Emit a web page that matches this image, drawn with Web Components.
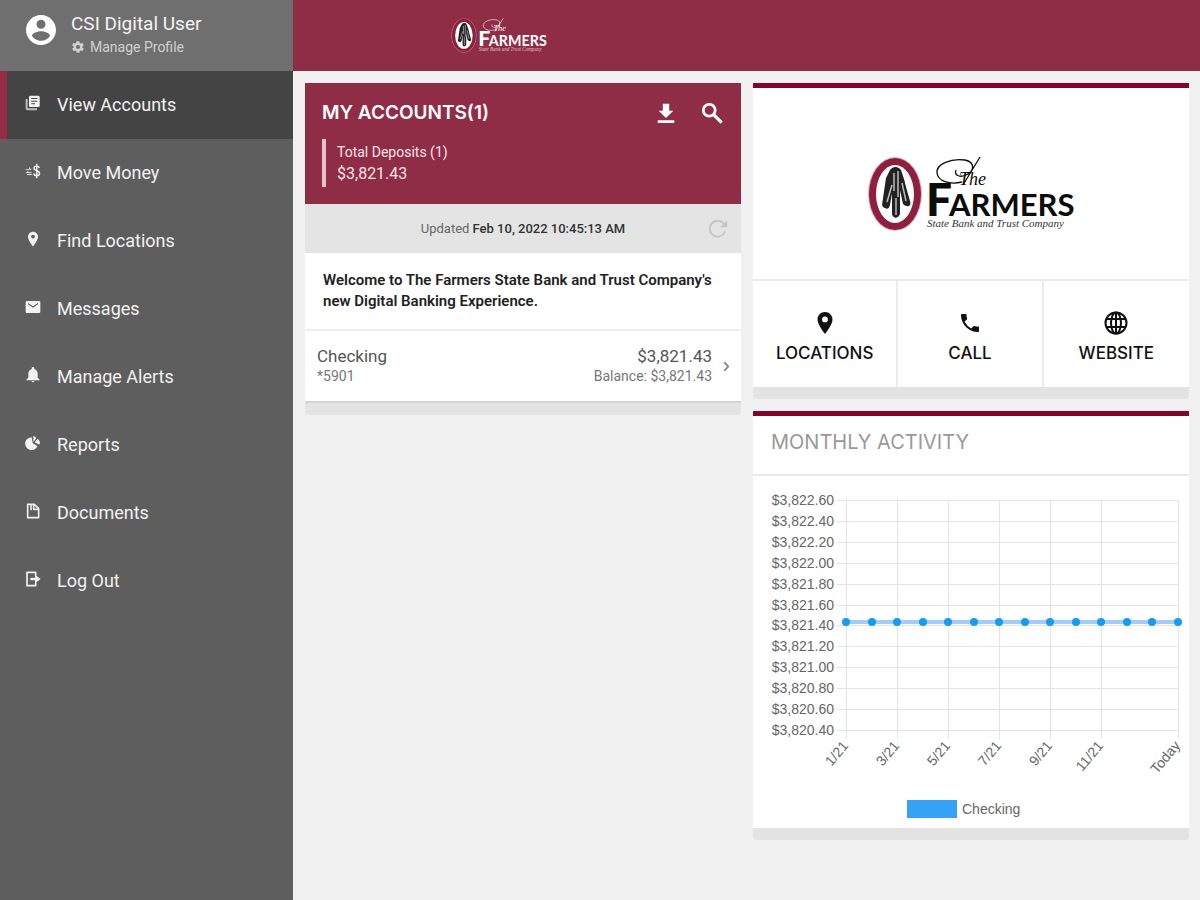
<!DOCTYPE html>
<html lang="en">
<head>
<meta charset="utf-8">
<meta name="viewport" content="width=device-width, initial-scale=1">
<title>My Accounts</title>
<style>
  body { margin: 0; background: #f1f1f1; font-family: Roboto, "Liberation Sans", sans-serif; }
</style>
</head>
<body>
<bank-app></bank-app>
<script>
const define = (name, html, setup) => {
  const template = document.createElement('template');
  template.innerHTML = html;
  customElements.define(name, class extends HTMLElement {
    connectedCallback() {
      if (this.shadowRoot) return;
      const root = this.attachShadow({ mode: 'open' });
      root.append(template.content.cloneNode(true));
      if (setup) setup.call(this, root);
    }
  });
};

const ICONS = {
  user: '<path d="M12 2C6.5 2 2 6.500 2 12s4.500 10 10 10 10-4.500 10-10S17.500 2 12 2zm0 3.200a3 3 0 1 1 0 6 3 3 0 0 1 0-6zM12 19.200a7.200 7.200 0 0 1-6-3.200c0-2 4-3.100 6-3.100s6 1.100 6 3.100a7.200 7.200 0 0 1-6 3.200z"/>',
  gear: '<path d="M19.400 13a7.500 7.500 0 0 0 0-2l2.100-1.600c.2-.2.3-.4.1-.7l-2-3.400c-.1-.2-.4-.3-.6-.2l-2.500 1a7.300 7.300 0 0 0-1.700-1l-.4-2.600c0-.3-.2-.5-.5-.5h-4c-.2 0-.4.2-.5.500l-.4 2.600a7.700 7.700 0 0 0-1.700 1l-2.500-1c-.2-.1-.5 0-.6.200l-2 3.400c-.1.300-.1.500.1.700L4.600 11a8 8 0 0 0 0 2l-2.200 1.600c-.1.200-.2.400-.1.700l2 3.400c.1.200.4.300.6.200l2.500-1c.5.400 1.100.8 1.700 1l.4 2.600c.1.300.3.500.5.500h4c.3 0 .5-.2.500-.5l.4-2.600a7.300 7.300 0 0 0 1.700-1l2.500 1c.2.100.5 0 .6-.2l2-3.400c.2-.3.100-.5-.1-.7L19.400 13zM12 15.500a3.500 3.500 0 1 1 0-7 3.500 3.500 0 0 1 0 7z"/>',
  library: '<path d="M4 6H1v14c0 1.700 1.300 3 3 3h14v-3H4z" opacity=".7"/><path fill-rule="evenodd" d="M20 1H8a2 2 0 0 0-2 2v13c0 1.100.9 2 2 2h12a2 2 0 0 0 2-2V3a2 2 0 0 0-2-2zM9.500 4.500h9V6h-9zm0 4h9V10h-9zm0 4H15V14H9.500z"/>',
  money: '<path d="M1 9h5V6l4 4H1zM10 14H5v-2.500L1 15h9z"/><path d="M10 18H3v-1.500h7z"/><path d="M21.500 7.500C21 5.500 19.500 4.700 17.500 4.700c-2.400 0-4 1.300-4 3.300 0 4.700 8.300 2.500 8.300 7.300 0 2.300-1.700 3.700-4.200 3.700-2.600 0-4.200-1.300-4.500-3.500M17.600 1v22" fill="none" stroke="currentColor" stroke-width="2.200"/>',
  pin: '<path d="M12 1C7.700 1 4.500 4.300 4.500 8.500 4.500 14 12 23 12 23s7.500-9 7.500-14.500C19.500 4.300 16.300 1 12 1zm0 10.300a2.900 2.900 0 1 1 0-5.800 2.900 2.900 0 0 1 0 5.800z"/>',
  mail: '<path d="M21 3H3a2 2 0 0 0-2 2v14c0 1.100.9 2 2 2h18a2 2 0 0 0 2-2V5a2 2 0 0 0-2-2zm-1.500 5L12 13 4.500 8V6l7.500 5 7.500-5z"/>',
  bell: '<path d="M12 23a2.400 2.400 0 0 0 2.300-2H9.700a2.400 2.400 0 0 0 2.300 2zm7-7v-6c0-3.400-1.900-6-5-6.800V2a2 2 0 0 0-4 0v1.200C6.900 4 5 6.600 5 10v6l-3 3v1h20v-1z"/>',
  pie: '<path d="M10 3.200A9.700 9.700 0 1 0 18.700 17L11.500 12z"/><path d="M12.500 1v9.500L17 5a8 8 0 0 0-4.500-4zM19 5.500 14.500 11 21.500 14.500C23.500 11 22 7.500 19 5.500z"/>',
  doc: '<path d="M4 2h10l6.500 6.500V22H4z M13 2v7.500h7M9 2v9" fill="none" stroke="currentColor" stroke-width="2.400" stroke-linejoin="round"/>',
  exit: '<path d="M16 7V2H3v20h13v-5" fill="none" stroke="currentColor" stroke-width="2.500" stroke-linejoin="round"/><path d="M8 10h7V5.500l8.500 6.500-8.500 6.500V14H8z"/>',
  download: '<path d="M20 9.500h-4.500V2h-7v7.500H4l8 8zM3 20v3h18v-3z"/>',
  search: '<circle cx="9" cy="9" r="6.500" fill="none" stroke="currentColor" stroke-width="3"/><path d="m13.500 13.500 9 9" stroke="currentColor" stroke-width="3.400"/>',
  refresh: '<path d="M20.500 15A9.500 9.500 0 1 1 18.800 5.300L21 7.500" fill="none" stroke="currentColor" stroke-width="2.200"/><path d="M23 1.500V10h-8.500z"/>',
  chevron: '<path d="m8 4 7 8-7 8" fill="none" stroke="currentColor" stroke-width="3.500"/>',
  phone: '<path d="M6.600 10.800a15 15 0 0 0 6.600 6.600l2.200-2.200c.3-.3.700-.4 1-.2 1.100.4 2.300.6 3.600.6.600 0 1 .4 1 1V20c0 .6-.4 1-1 1C10.600 21 3 13.400 3 4c0-.6.400-1 1-1h3.500c.6 0 1 .4 1 1 0 1.200.2 2.400.6 3.600.1.300 0 .7-.3 1z"/>',
  globe: '<g fill="none" stroke="currentColor" stroke-width="2"><circle cx="12" cy="12" r="10.500"/><ellipse cx="12" cy="12" rx="5" ry="10.500"/><path d="M12 1.500v21M2.500 8h19M2.500 16h19"/></g>'
};

define('ui-icon', `
<style>
  :host { display: inline-flex; width: 18px; height: 18px; flex: none; }
  svg { width: 100%; height: 100%; fill: currentColor; }
</style>
<svg viewBox="0 0 24 24" aria-hidden="true"></svg>`, function (root) {
  root.querySelector('svg').innerHTML = ICONS[this.getAttribute('name')];
});

define('bank-logo', `
<style>
  :host { display: block; color: #0c0c0c; }
  svg { display: block; width: 100%; overflow: visible; }
  .tag { fill: var(--logo-tag, #333); }
</style>
<svg viewBox="0 0 208 80" role="img" aria-label="The Farmers State Bank and Trust Company">
  <ellipse cx="28" cy="40" rx="27" ry="37" fill="var(--logo-edge, #d9b9c2)"/>
  <ellipse cx="28" cy="40" rx="26" ry="36" fill="#8e1f3f"/>
  <ellipse cx="28" cy="40" rx="19" ry="29" fill="#fff"/>
  <g fill="#222">
    <path d="M23 16c3-4 8-4 11 0l3 9 5 25c-2 3-4 2-6 0l-3-14v24c-2 5-7 5-8 0V38l-4 13c-3 4-5 3-6 0l4-27z"/>
    <path d="m21 27-4 26c3 3 5 2 6-2l4-24zM35 27l5 25c3 1 4-2 3-5l-6-21z"/>
  </g>
  <path d="M27 19v18M31 17v26M25 31l-5 17M35 29l4 18M29 44v17" stroke="#bbb" stroke-width="1.500" fill="none"/>
  <path d="M95 28C82 31 71 27 70 19 69 10 84 4 98 6c10 2 10 11 1 15-7 3-12 0-10-5M113 3 96 31" fill="none" stroke="currentColor" stroke-width="1.300"/>
  <text x="92" y="31" font-family="Liberation Serif, serif" font-style="italic" font-size="18" fill="currentColor">The</text>
  <text y="62" font-family="Lato, sans-serif" font-weight="700" fill="currentColor"><tspan x="59" font-size="46" font-weight="900">F</tspan><tspan x="82" font-size="31">ARMERS</tspan></text>
  <text class="tag" x="60" y="73" font-family="Liberation Serif, serif" font-style="italic" font-size="11">State Bank and Trust Company</text>
</svg>`);

define('nav-item', `
<style>
  :host { display: block; }
  a { display: flex; align-items: center; gap: 16px; height: 68px; padding-left: 18px; border-left: 7px solid transparent; box-sizing: border-box;
      color: #f2f2f2; font-size: 18px; line-height: 24px; text-decoration: none; }
  :host([current]) a { background: #444; border-left-color: #952b49; }
  .icon { display: contents; }
  ui-icon { width: 16px; height: 16px; margin-bottom: 4px; }
</style>
<a href="#"><span class="icon"></span><slot></slot></a>`, function (root) {
  root.querySelector('.icon').innerHTML = `<ui-icon name="${this.getAttribute('icon')}"></ui-icon>`;
  if (this.hasAttribute('current')) root.querySelector('a').setAttribute('aria-current', 'page');
});

define('side-nav', `
<style>
  :host { display: block; background: #5e5e5e; color: #fff; }
  .profile { display: flex; gap: 12px; height: 71px; padding: 12px 0 0 23px; box-sizing: border-box; background: #6f6f6f; }
  .profile > ui-icon { width: 36px; height: 36px; }
  .name { font-size: 19px; line-height: 24px; color: #f4f4f4; }
  .manage { display: flex; align-items: center; gap: 5px; color: #d0d0d0; font-size: 14px; line-height: 22px; text-decoration: none; }
  .manage ui-icon { width: 14px; height: 14px; }
</style>
<div class="profile">
  <ui-icon name="user"></ui-icon>
  <div><div class="name">CSI Digital User</div><a class="manage" href="#"><ui-icon name="gear"></ui-icon>Manage Profile</a></div>
</div>
<nav aria-label="Main">
  <nav-item icon="library" current>View Accounts</nav-item>
  <nav-item icon="money">Move Money</nav-item>
  <nav-item icon="pin">Find Locations</nav-item>
  <nav-item icon="mail">Messages</nav-item>
  <nav-item icon="bell">Manage Alerts</nav-item>
  <nav-item icon="pie">Reports</nav-item>
  <nav-item icon="doc">Documents</nav-item>
  <nav-item icon="exit">Log Out</nav-item>
</nav>`);

define('app-header', `
<style>
  :host { display: flex; align-items: center; height: 71px; padding-left: 158px; box-sizing: border-box; background: #902d46; }
  bank-logo { width: 96px; color: #fff; --logo-tag: #e3bfc8; --logo-edge: #c98a9a; }
</style>
<bank-logo></bank-logo>`);

define('ui-card', `
<style>
  :host { display: block; }
  .body { background: #fff; }
  :host([accent]) .body { border-top: 5px solid #820629; }
  .foot { height: 12px; background: #e3e3e3; border-radius: 0 0 4px 4px; }
</style>
<div class="body"><slot></slot></div><div class="foot"></div>`);

define('accounts-card', `
<style>
  :host { display: block; }
  .head { background: #902d46; color: #fff; padding: 16px 18px 17px 17px; }
  .bar { display: flex; align-items: center; height: 28px; }
  h2 { flex: 1; margin: 0; font: 600 19px/28px Inter, sans-serif; }
  button { display: flex; border: 0; padding: 0; background: none; color: inherit; }
  .bar button { margin-left: 24px; }
  .bar ui-icon { width: 22px; height: 22px; }
  .total { margin-top: 12px; border-left: 4px solid #e6c3cc; padding: 2px 0 2px 11px; color: #f6e4e8; font-size: 14px; line-height: 22px; }
  .total strong { display: block; font-weight: 400; font-size: 16px; }
  .updated { display: grid; grid-template-columns: 1fr auto 1fr; align-items: center; height: 49px; padding: 0 13px; background: #e4e4e4; color: #666; font-size: 13px; line-height: 20px; }
  .updated p { grid-column: 2; margin: 0; }
  .updated time { color: #333; font-weight: 500; }
  .updated button { justify-self: end; color: #c6c6c6; }
  .updated ui-icon { width: 20px; height: 20px; }
  .welcome { margin: 0; padding: 17px 18px; border-bottom: 2px solid #eee; color: #222; font-weight: 600; font-size: 15px; line-height: 21px; }
  .account { display: flex; align-items: center; height: 72px; box-sizing: border-box; padding: 0 8px 0 12px; color: #555; text-decoration: none; border-bottom: 2px solid #d4d4d4; font-size: 17px; line-height: 20px; }
  .account span { display: block; }
  .name { flex: 1; }
  .sum { text-align: right; margin-right: 8px; }
  small { display: block; font-size: 14px; color: #777; }
  .account ui-icon { width: 13px; height: 13px; color: #888; }
</style>
<ui-card>
  <div class="head">
    <div class="bar"><h2>MY ACCOUNTS(1)</h2>
      <button aria-label="Download"><ui-icon name="download"></ui-icon></button>
      <button aria-label="Search"><ui-icon name="search"></ui-icon></button></div>
    <div class="total">Total Deposits (1)<strong>$3,821.43</strong></div>
  </div>
  <div class="updated"><p>Updated <time>Feb 10, 2022 10:45:13 AM</time></p><button aria-label="Refresh"><ui-icon name="refresh"></ui-icon></button></div>
  <p class="welcome">Welcome to The Farmers State Bank and Trust Company's new Digital Banking Experience.</p>
  <a class="account" href="#"><span class="name">Checking<small>*5901</small></span><span class="sum">$3,821.43<small>Balance: $3,821.43</small></span><ui-icon name="chevron"></ui-icon></a>
</ui-card>`);

define('contact-card', `
<style>
  :host { display: block; }
  .logo { display: flex; justify-content: center; align-items: center; height: 191px; padding-top: 20px; box-sizing: border-box; }
  .logo bank-logo { width: 208px; }
  .actions { display: grid; grid-template-columns: repeat(3, 1fr); border-top: 2px solid #ebebeb; }
  a { display: flex; flex-direction: column; align-items: center; gap: 7px; height: 106px; padding-top: 30px; box-sizing: border-box; color: #111; text-decoration: none; font: 500 17px/22px Inter, sans-serif; }
  a:not(:last-child) { border-right: 2px solid #ebebeb; }
  ui-icon { width: 24px; height: 24px; }
</style>
<ui-card accent>
  <div class="logo"><bank-logo></bank-logo></div>
  <div class="actions">
    <a href="#"><ui-icon name="pin"></ui-icon>LOCATIONS</a>
    <a href="#"><ui-icon name="phone"></ui-icon>CALL</a>
    <a href="#"><ui-icon name="globe"></ui-icon>WEBSITE</a>
  </div>
</ui-card>`);

define('line-chart', `
<style>
  :host { display: block; }
  svg { display: block; width: 100%; font: 14px "Liberation Sans", sans-serif; }
  text { fill: #666; }
  .grid { stroke: #e4e4e4; stroke-width: 1; shape-rendering: crispEdges; }
</style>
<svg viewBox="0 0 436 352" role="img" aria-label="Monthly checking balance"></svg>`, function (root) {
  const left = 93, right = 425, top = 24, bottom = 254;
  const step = (right - left) / 13;
  const months = { 0: '1/21', 2: '3/21', 4: '5/21', 6: '7/21', 8: '9/21', 10: '11/21', 13: 'Today' };
  let out = '';
  for (let i = 0; i < 12; i++) {
    const y = Math.round(top + i * (bottom - top) / 11);
    out += `<path class="grid" d="M84 ${y}H${right}"/><text x="81" y="${y + 5}" text-anchor="end">$${(3822.6 - i * 0.2).toFixed(2).replace('3', '3,')}</text>`;
  }
  for (const i in months) {
    const x = Math.round(left + i * step);
    out += `<path class="grid" d="M${x} ${top}V${bottom + 9}"/><text transform="translate(${x + 3} ${bottom + 16}) rotate(-50)" text-anchor="end">${months[i]}</text>`;
  }
  out += `<path d="M${left} 146H${right}" stroke="#a3cdf6" stroke-width="4"/>`;
  for (let i = 0; i < 14; i++) out += `<circle cx="${Math.round(left + i * step)}" cy="146" r="4" fill="#189bf0"/>`;
  out += '<path d="M154 324h50v18h-50z" fill="#36a2f5"/><text x="209" y="338">Checking</text>';
  root.querySelector('svg').innerHTML = out;
});

define('activity-card', `
<style>
  :host { display: block; }
  h2 { margin: 0; padding: 12px 18px 18px; border-bottom: 2px solid #e8e8e8; color: #999; font: 400 20px/28px Inter, sans-serif; }
</style>
<ui-card accent><h2>MONTHLY ACTIVITY</h2><line-chart></line-chart></ui-card>`);

define('bank-app', `
<style>
  :host { display: grid; grid-template-columns: 293px 1fr; min-height: 100vh; background: #f1f1f1; }
  main { display: grid; grid-template-columns: 1fr 1fr; align-items: start; gap: 12px; padding: 12px 11px 12px 12px; }
  .column { display: grid; gap: 12px; }
</style>
<side-nav></side-nav>
<div><app-header></app-header>
  <main><accounts-card></accounts-card><div class="column"><contact-card></contact-card><activity-card></activity-card></div></main>
</div>`);
</script>
</body>
</html>
